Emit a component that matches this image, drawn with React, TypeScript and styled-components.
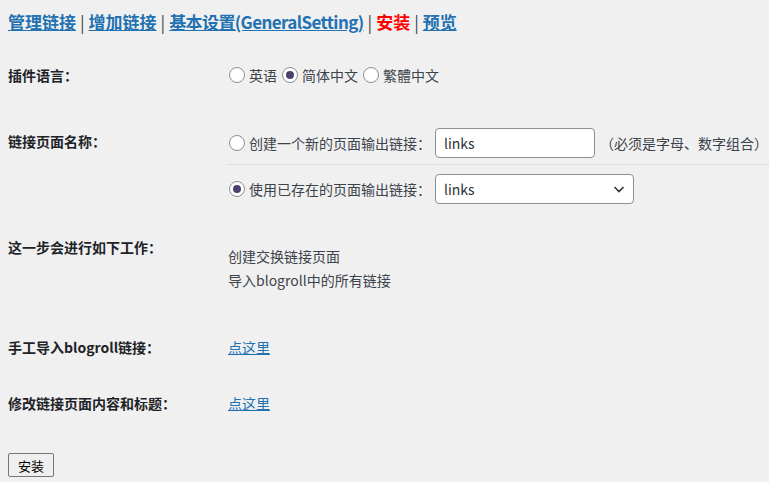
import { createGlobalStyle } from "styled-components";
import styled from "styled-components";

const GlobalStyle = createGlobalStyle`
  body {
    margin: 0;
    background: #f0f0f1;
    color: #3c434a;
    font-family: "Noto Sans CJK SC", "Noto Sans", sans-serif;
    font-size: 14px;
  }
`;

const Wrap = styled.div`
  padding: 0 0 0 8px;
`;

const Nav = styled.h2`
  margin: 11px 0 12px;
  font-size: 17px;
  line-height: 22px;
  height: 22px;
  font-weight: 700;
  color: #3c434a;
  white-space: nowrap;
`;

const NavLink = styled.a<{ $active?: boolean; $tight?: boolean }>`
  color: ${({ $active }) => ($active ? "#ff0000" : "#2271b1")};
  text-decoration: ${({ $active }) => ($active ? "none" : "underline")};
  letter-spacing: ${({ $tight }) => ($tight ? "-0.6px" : "0")};
  cursor: pointer;
`;

const Sep = styled.span`
  font-weight: 400;
  color: #3c434a;
  margin: 0 4px;
`;

const Row = styled.div<{ $pt: number; $pb: number }>`
  display: grid;
  grid-template-columns: 220px 1fr;
  padding: ${({ $pt }) => $pt}px 0 ${({ $pb }) => $pb}px;
`;

const Label = styled.div<{ $pt?: number }>`
  font-weight: 700;
  color: #1d2327;
  line-height: 20px;
  height: 20px;
  padding-top: ${({ $pt }) => $pt ?? 0}px;
`;

const Cell = styled.div<{ $pt?: number }>`
  padding-top: ${({ $pt }) => $pt ?? 0}px;
  line-height: 20px;
`;

const Line = styled.div`
  display: flex;
  align-items: center;
  height: 20px;
`;

const Choice = styled.label`
  display: flex;
  align-items: center;
  margin-right: 4px;
`;

const Radio = styled.span<{ $checked?: boolean }>`
  flex: none;
  width: 16px;
  height: 16px;
  box-sizing: border-box;
  border: 1px solid #8c8f94;
  border-radius: 50%;
  background: #fff;
  margin: 0 4px 0 1px;
  display: flex;
  align-items: center;
  justify-content: center;
  &::after {
    content: "";
    display: ${({ $checked }) => ($checked ? "block" : "none")};
    width: 8px;
    height: 8px;
    border-radius: 50%;
    background: #4f416d;
  }
`;

const SubRow = styled.div<{ $pt: number; $pb: number; $line?: boolean }>`
  display: flex;
  align-items: center;
  padding: ${({ $pt }) => $pt}px 0 ${({ $pb }) => $pb}px;
  border-bottom: ${({ $line }) => ($line ? "1px solid #dcdcde" : "none")};
  white-space: nowrap;
`;

const TextInput = styled.div`
  flex: none;
  width: 160px;
  height: 30px;
  box-sizing: border-box;
  border: 1px solid #8c8f94;
  border-radius: 4px;
  background: #fff;
  padding: 0 8px;
  display: flex;
  align-items: center;
  color: #2c3338;
  font-size: 14px;
  margin-left: 4px;
`;

const Select = styled(TextInput)`
  width: 199px;
  justify-content: space-between;
  padding-right: 6px;
`;

const Hint = styled.span`
  margin-left: 5px;
  color: #3c434a;
`;

const Item = styled.div`
  line-height: 24px;
`;

const PlainLink = styled.a`
  color: #2271b1;
  text-decoration: underline;
`;

const Button = styled.button`
  margin-top: 22px;
  height: 24px;
  padding: 0 9px;
  font-family: "Noto Sans CJK SC", sans-serif;
  font-size: 13px;
  color: #000;
  background: #efefef;
  border: 1px solid #767676;
  border-radius: 2px;
`;

export default function App() {
  return (
    <Wrap>
      <GlobalStyle />
      <Nav>
        <NavLink>管理链接</NavLink>
        <Sep>|</Sep>
        <NavLink>增加链接</NavLink>
        <Sep>|</Sep>
        <NavLink $tight>基本设置(GeneralSetting)</NavLink>
        <Sep>|</Sep>
        <NavLink $active>安装</NavLink>
        <Sep>|</Sep>
        <NavLink>预览</NavLink>
      </Nav>

      <Row $pt={20} $pb={20}>
        <Label>插件语言：</Label>
        <Cell>
          <Line>
            <Choice><Radio />英语</Choice>
            <Choice><Radio $checked />简体中文</Choice>
            <Choice><Radio />繁體中文</Choice>
          </Line>
        </Cell>
      </Row>

      <Row $pt={0} $pb={5}>
        <Label $pt={26}>链接页面名称：</Label>
        <Cell $pt={15}>
          <SubRow $pt={8} $pb={6} $line>
            <Radio />创建一个新的页面输出链接：
            <TextInput>links</TextInput>
            <Hint>（必须是字母、数字组合）</Hint>
          </SubRow>
          <SubRow $pt={9} $pb={8}>
            <Radio $checked />使用已存在的页面输出链接：
            <Select>
              links
              <svg width="16" height="16" viewBox="0 0 16 16">
                <path d="M3.5 6l4.5 4.5L12.5 6" fill="none" stroke="#2c3338" strokeWidth="1.6" />
              </svg>
            </Select>
          </SubRow>
        </Cell>
      </Row>

      <Row $pt={20} $pb={25}>
        <Label>这一步会进行如下工作：</Label>
        <Cell $pt={7}>
          <Item>创建交换链接页面</Item>
          <Item>导入blogroll中的所有链接</Item>
        </Cell>
      </Row>

      <Row $pt={20} $pb={18}>
        <Label>手工导入blogroll链接：</Label>
        <Cell><Line><PlainLink>点这里</PlainLink></Line></Cell>
      </Row>

      <Row $pt={18} $pb={18}>
        <Label>修改链接页面内容和标题：</Label>
        <Cell><Line><PlainLink>点这里</PlainLink></Line></Cell>
      </Row>

      <Button>安装</Button>
    </Wrap>
  );
}
